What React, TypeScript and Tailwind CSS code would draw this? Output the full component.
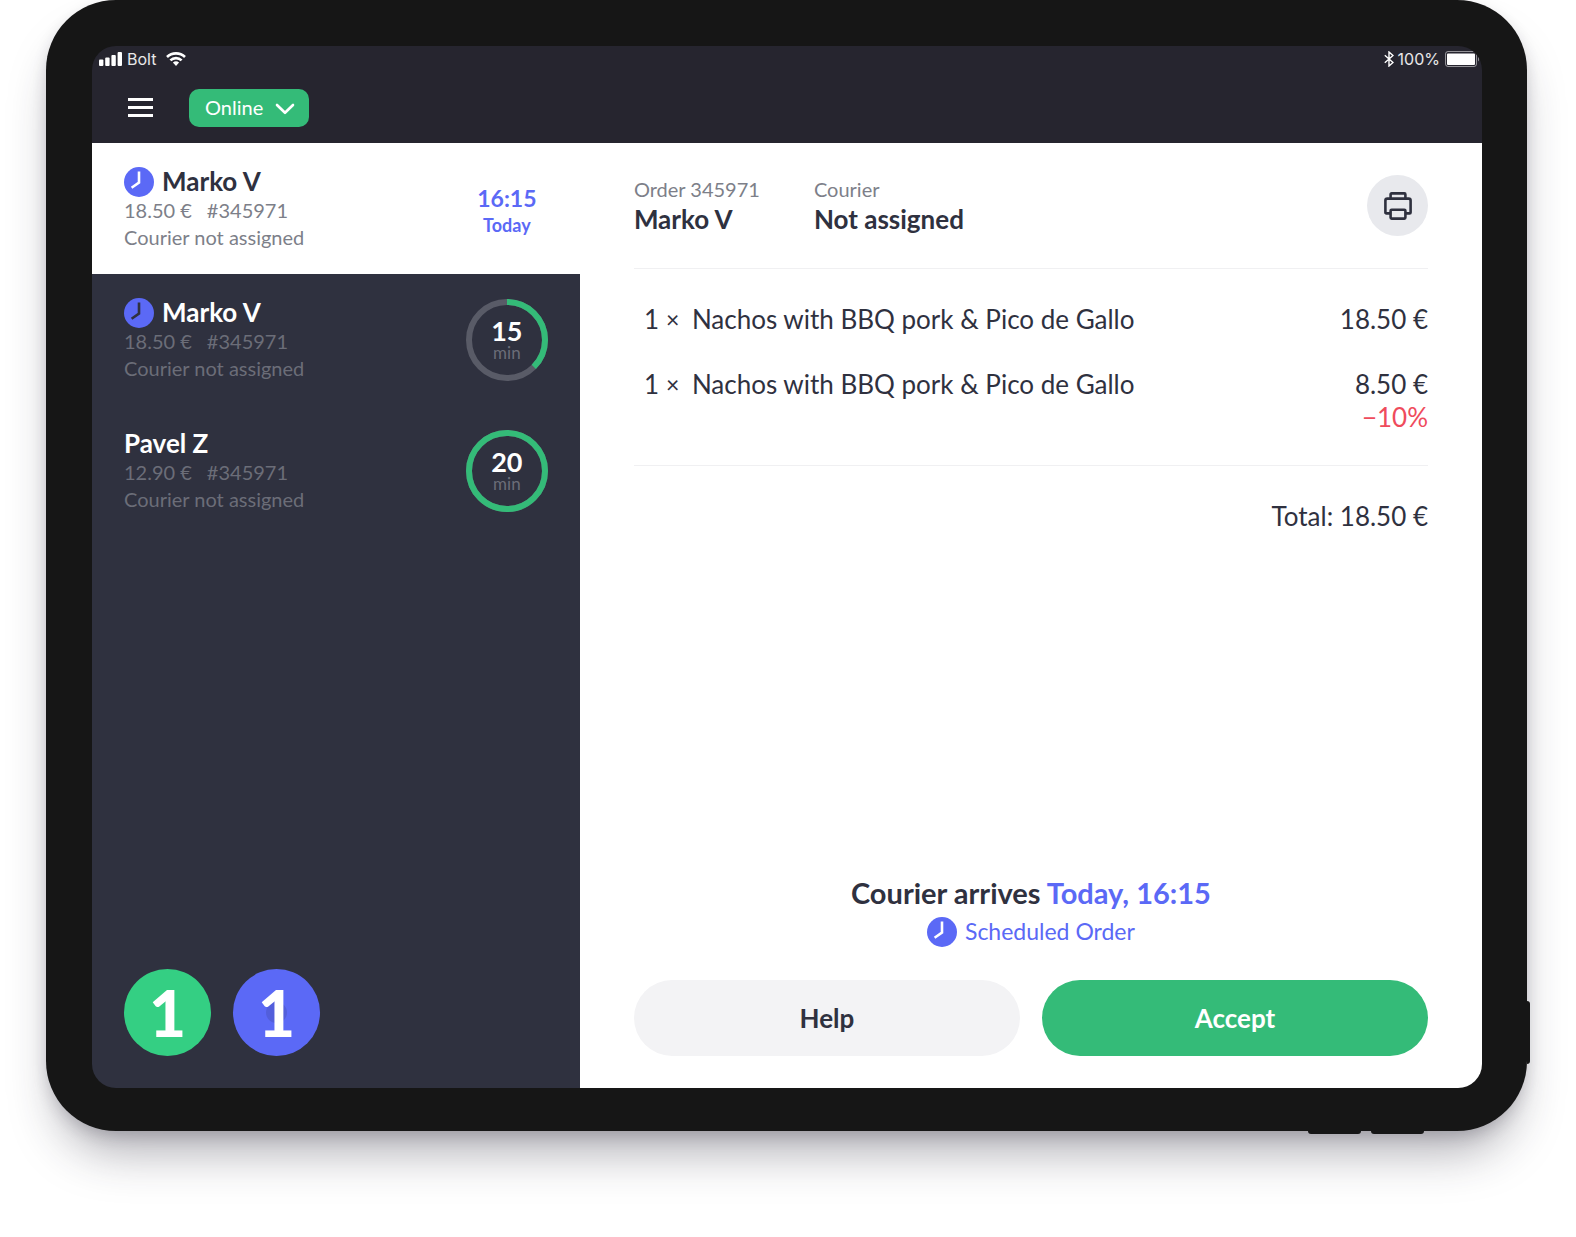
import { useState } from 'react';

interface Order {
  name: string;
  price: string;
  number: string;
  scheduled: boolean;
  time?: string;
  minutes?: number;
  progress?: number;
}

const orders: Order[] = [
  { name: 'Marko V', price: '18.50 €', number: '#345971', scheduled: true, time: '16:15' },
  { name: 'Marko V', price: '18.50 €', number: '#345971', scheduled: true, minutes: 15, progress: 0.375 },
  { name: 'Pavel Z', price: '12.90 €', number: '#345971', scheduled: false, minutes: 20, progress: 1 },
];

const items = [
  { qty: 1, name: 'Nachos with BBQ pork & Pico de Gallo', price: '18.50 €' },
  { qty: 1, name: 'Nachos with BBQ pork & Pico de Gallo', price: '8.50 €', discount: '−10%' },
];

function ClockIcon({ hands = '#ffffff' }: { hands?: string }) {
  return (
    <svg width="30" height="30" viewBox="0 0 30 30" className="shrink-0" aria-hidden="true">
      <circle cx="15" cy="15" r="15" fill="#5b69f6" />
      <path d="M15 4.4V15.6L7.6 20.8" fill="none" stroke={hands} strokeWidth="2.6" />
    </svg>
  );
}

function Countdown({ minutes, progress }: { minutes: number; progress: number }) {
  const length = 2 * Math.PI * 38;
  return (
    <span className="relative flex size-[82px] flex-col items-center justify-center">
      <svg viewBox="0 0 82 82" className="absolute inset-0" fill="none" strokeWidth="6" aria-hidden="true">
        <circle cx="41" cy="41" r="38" stroke="#595b67" />
        <circle
          cx="41"
          cy="41"
          r="38"
          stroke="#34bb78"
          strokeDasharray={`${length * progress} ${length}`}
          transform="rotate(-90 41 41)"
        />
      </svg>
      <span className="text-[27px] leading-[26px] font-bold text-white">{minutes}</span>
      <span className="text-[17px] leading-[18px] text-[#6b6d78]">min</span>
    </span>
  );
}

function StatusBar() {
  return (
    <div className="flex h-[26px] items-center justify-between pr-0.5 pl-[7px] font-[Inter,sans-serif] text-base text-white/90">
      <div className="flex items-center">
        <svg width="23" height="14" viewBox="0 0 23 14" fill="#fff" className="mr-[5px]" aria-hidden="true">
          <rect x="0" y="7.5" width="4.4" height="6.5" rx="1" />
          <rect x="6.2" y="5.5" width="4.4" height="8.5" rx="1" />
          <rect x="12.4" y="3" width="4.4" height="11" rx="1" />
          <rect x="18.6" y="0" width="4.4" height="14" rx="1" />
        </svg>
        <span>Bolt</span>
        <svg width="20" height="14" viewBox="0 0 20 14" fill="none" stroke="#fff" strokeWidth="2.6" className="ml-2.5" aria-hidden="true">
          <path d="M1 5A13 13 0 0 1 19 5" />
          <path d="M4.4 8.4A8 8 0 0 1 15.6 8.4" />
          <path d="M6.9 10.6A4.6 4.6 0 0 1 13.1 10.6L10 14Z" fill="#fff" stroke="none" />
        </svg>
      </div>
      <div className="flex items-center">
        <svg width="10" height="16" viewBox="0 0 10 16" fill="none" stroke="#fff" strokeWidth="1.4" className="mr-1" aria-hidden="true">
          <path d="M0.8 4.2L9 11.5L5 15V1L9 4.5L0.8 11.8" />
        </svg>
        <span>100%</span>
        <svg width="35" height="16" viewBox="0 0 35 16" className="ml-[5px]" aria-hidden="true">
          <rect x="0.5" y="0.5" width="31" height="15" rx="2.5" fill="none" stroke="#fff" strokeOpacity="0.5" />
          <rect x="2" y="2.5" width="28" height="11.5" rx="1" fill="#fff" />
          <path d="M33 5.5C34.6 6.5 34.6 9.5 33 10.5Z" fill="#fff" fillOpacity="0.5" />
        </svg>
      </div>
    </div>
  );
}

function Header() {
  return (
    <header className="bg-[#26252f]">
      <StatusBar />
      <div className="flex h-[71px] items-center gap-9 px-9">
        <button type="button" aria-label="Menu" className="flex w-[25px] flex-col gap-[5px]">
          <span className="h-[3px] bg-white" />
          <span className="h-[3px] bg-white" />
          <span className="h-[3px] bg-white" />
        </button>
        <div className="relative">
          <select
            aria-label="Status"
            className="h-[38px] w-[120px] appearance-none rounded-[10px] bg-[#34bb78] pb-0.5 pl-4 text-xl text-white"
          >
            <option>Online</option>
            <option>Offline</option>
          </select>
          <svg
            width="20"
            height="12"
            viewBox="0 0 20 12"
            fill="none"
            stroke="#fff"
            strokeWidth="2.6"
            strokeLinecap="round"
            strokeLinejoin="round"
            className="pointer-events-none absolute top-[14px] right-[14px]"
            aria-hidden="true"
          >
            <path d="M2 2L10 9.8L18 2" />
          </svg>
        </div>
      </div>
    </header>
  );
}

function OrderCard({ order, active, onSelect }: { order: Order; active: boolean; onSelect: () => void }) {
  return (
    <button
      type="button"
      onClick={onSelect}
      className={`flex w-full items-center justify-between px-8 py-[23px] text-left ${active ? 'bg-white' : ''}`}
    >
      <span className={`flex flex-col text-[20px] leading-[27px] ${active ? 'text-[#7d7f89]' : 'text-[#6b6d78]'}`}>
        <span
          className={`flex h-[31px] items-center gap-2 text-[26px] font-bold ${active ? 'text-[#2f313f]' : 'text-white'}`}
        >
          {order.scheduled && <ClockIcon hands={active ? '#ffffff' : '#2f313f'} />}
          {order.name}
        </span>
        <span className="flex gap-[15px]">
          <span>{order.price}</span>
          <span>{order.number}</span>
        </span>
        <span>Courier not assigned</span>
      </span>
      {order.time ? (
        <span className="flex w-[82px] flex-col items-center pt-1 font-bold text-[#5b69f6]">
          <span className="text-[23px] leading-7">{order.time}</span>
          <span className="text-[18px] leading-[26px]">Today</span>
        </span>
      ) : (
        <Countdown minutes={order.minutes ?? 0} progress={order.progress ?? 0} />
      )}
    </button>
  );
}

function Sidebar() {
  const [selected, setSelected] = useState(0);

  return (
    <aside className="flex w-[35.1%] shrink-0 flex-col bg-[#2f313f]">
      {orders.map((order, i) => (
        <OrderCard key={i} order={order} active={i === selected} onSelect={() => setSelected(i)} />
      ))}
      <div className="mt-auto flex gap-[22px] p-8 text-[64px] leading-none font-black text-white">
        <span className="flex size-[87px] items-center justify-center rounded-full bg-[#34cf83]">1</span>
        <span className="flex size-[87px] items-center justify-center rounded-full bg-[radial-gradient(circle,#525edb_10px,#5b69f6_11px)]">
          1
        </span>
      </div>
    </aside>
  );
}

function OrderDetails() {
  return (
    <main className="flex flex-1 flex-col bg-white px-[54px] pb-8 text-[26px] leading-[33px] text-[#2f313f]">
      <div className="flex items-center justify-between border-b border-[#f0f0f2] py-8">
        <dl className="flex gap-[54px]">
          <div>
            <dt className="text-[20px] leading-7 text-[#7d7f89]">Order 345971</dt>
            <dd className="font-bold">Marko V</dd>
          </div>
          <div>
            <dt className="text-[20px] leading-7 text-[#7d7f89]">Courier</dt>
            <dd className="font-bold">Not assigned</dd>
          </div>
        </dl>
        <button
          type="button"
          aria-label="Print"
          className="flex size-[61px] items-center justify-center rounded-full bg-[#e8e9ed]"
        >
          <svg width="28" height="28" viewBox="0 0 28 28" fill="none" stroke="#2f313f" strokeWidth="2.6" strokeLinejoin="round" aria-hidden="true">
            <path d="M6.6 6.6V2.4Q6.6 1.4 7.6 1.4H20.4Q21.4 1.4 21.4 2.4V6.6" />
            <path d="M6.6 21.4H2.4Q1.4 21.4 1.4 20.4V8.6Q1.4 6.6 3.4 6.6H24.6Q26.6 6.6 26.6 8.6V20.4Q26.6 21.4 25.6 21.4H21.4" />
            <rect x="6.6" y="17.8" width="14.8" height="8.8" rx="1" />
          </svg>
        </button>
      </div>

      <ul className="flex flex-col gap-8 border-b border-[#f0f0f2] pt-[34px] pb-[31px]">
        {items.map((item, i) => (
          <li key={i} className="flex pl-2.5">
            <span className="w-[22px]">{item.qty}</span>
            <span className="w-[26px] text-[23px]">×</span>
            <span>{item.name}</span>
            <span className="ml-auto text-right">
              {item.price}
              {item.discount && <span className="block text-[#ef4b5c]">{item.discount}</span>}
            </span>
          </li>
        ))}
      </ul>

      <p className="pt-[34px] text-right">Total: 18.50 €</p>

      <div className="mt-auto flex flex-col items-center">
        <p className="text-[29px] font-bold">
          Courier arrives <span className="text-[#5b69f6]">Today, 16:15</span>
        </p>
        <p className="mt-1.5 flex items-center gap-2 text-[23px] text-[#5b69f6]">
          <ClockIcon />
          Scheduled Order
        </p>
      </div>
      <div className="mt-8 grid grid-cols-2 gap-[22px] font-bold">
        <button type="button" className="h-[76px] rounded-full bg-[#f3f3f5]">
          Help
        </button>
        <button type="button" className="h-[76px] rounded-full bg-[#34bb78] text-white">
          Accept
        </button>
      </div>
    </main>
  );
}

export default function App() {
  return (
    <div className="flex min-h-screen flex-col overflow-hidden bg-white pr-[49px] pb-[106px] pl-[46px] font-[Lato,sans-serif]">
      <div className="relative flex flex-1 flex-col rounded-[70px] bg-[#161616] pt-[46px] pr-[45px] pb-[43px] pl-[46px] shadow-[0_32px_50px_-14px_rgba(38,35,52,0.4),0_6px_16px_-2px_rgba(38,35,52,0.2)]">
        {/* hardware buttons */}
        <span className="absolute right-[-3px] bottom-[67px] h-[63px] w-[3px] rounded-r-sm bg-[#161616]" />
        <span className="absolute right-[103px] bottom-[-3px] h-[3px] w-[53px] rounded-b-sm bg-[#161616]" />
        <span className="absolute right-[166px] bottom-[-3px] h-[3px] w-[53px] rounded-b-sm bg-[#161616]" />

        <div className="flex flex-1 flex-col overflow-hidden rounded-[24px]">
          <Header />
          <div className="flex flex-1">
            <Sidebar />
            <OrderDetails />
          </div>
        </div>
      </div>
    </div>
  );
}
